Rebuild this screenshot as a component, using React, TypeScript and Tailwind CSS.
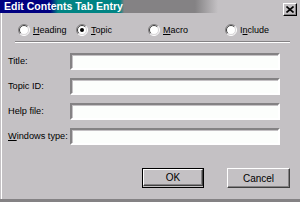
import React from "react";

const font = { fontFamily: '"Liberation Sans", Arial, sans-serif' };

function Radio({ checked }: { checked?: boolean }) {
  return (
    <svg width="12" height="12" viewBox="0 0 12 12" className="shrink-0">
      <circle cx="6" cy="6" r="5" fill="#fff" />
      <path d="M2.1 9.9 A5.5 5.5 0 0 1 9.9 2.1" stroke="#848284" fill="none" />
      <path d="M9.9 2.1 A5.5 5.5 0 0 1 2.1 9.9" stroke="#fff" fill="none" />
      <path d="M2.8 9.2 A4.5 4.5 0 0 1 9.2 2.8" stroke="#404040" fill="none" />
      <path d="M9.2 2.8 A4.5 4.5 0 0 1 2.8 9.2" stroke="#d8d6d8" fill="none" />
      {checked && <circle cx="6" cy="6" r="2" fill="#000" />}
    </svg>
  );
}

function Field({ label, u }: { label: string; u?: boolean }) {
  return (
    <div className="flex h-[17px] items-center">
      <div className="w-[68px] pl-[6px] text-[9.2px] leading-none text-black">
        {u ? (
          <>
            <span className="underline">{label[0]}</span>
            {label.slice(1)}
          </>
        ) : (
          label
        )}
      </div>
      <div className="h-[17px] w-[210px] border-2 border-t-[#848284] border-l-[#848284] border-b-white border-r-white bg-[#fcfefc] shadow-[inset_1px_1px_0_#c4c1c4]" />
    </div>
  );
}

export default function App() {
  const radios = [
    { label: "Heading", key: 0, w: "w-[58px]" },
    { label: "Topic", key: 0, w: "w-[72px]", checked: true },
    { label: "Macro", key: 0, w: "w-[77px]" },
    { label: "Include", key: 1, w: "w-[70px]" },
  ];

  return (
    <div
      className="relative h-[202px] w-[300px] overflow-hidden bg-[#c4c1c4] border-b-[3px] border-[#848284] flex flex-col"
      style={font}
    >
      <div className="h-[13px] shrink-0 bg-[linear-gradient(to_right,#000080_0px,#000080_50px,#008484_58px,#008484_120px,#848284_124px,#848284_195px,#c4c1c4_218px)] pl-[4px] text-[10.5px] font-bold leading-[13px] text-white">
        Edit Contents Tab Entry
      </div>
      <div className="absolute left-[283px] top-[3px] flex h-[13px] w-[14px] items-center justify-center border border-t-white border-l-white border-r-black border-b-black bg-[#c4c1c4] shadow-[inset_-1px_-1px_0_#848284]">
        <svg width="8" height="7" viewBox="0 0 8 7">
          <path d="M0.5 0.5 L7.5 6.5 M7.5 0.5 L0.5 6.5" stroke="#000" strokeWidth="1.6" />
        </svg>
      </div>

      <div className="ml-[1px] flex flex-1 flex-col border-l border-white">
        <div className="mt-[11px] flex h-[12px] items-center pl-[16px]">
          {radios.map((r) => (
            <div key={r.label} className={`flex items-center gap-[3px] ${r.w}`}>
              <Radio checked={r.checked} />
              <span className="text-[9px] leading-none text-black">
                {r.label.slice(0, r.key)}
                <span className="underline">{r.label[r.key]}</span>
                {r.label.slice(r.key + 1)}
              </span>
            </div>
          ))}
        </div>

        <div className="ml-[13px] mt-[5px] w-[275px] border-t border-b border-t-[#848284] border-b-white" />

        <div className="mt-[10px] flex flex-col gap-[8px]">
          <Field label="Title:" />
          <Field label="Topic ID:" />
          <Field label="Help file:" />
          <Field label="Windows type:" u />
        </div>

        <div className="mt-[23px] flex justify-end gap-[23px] pr-[10px]">
          <div className="border border-black">
            <div className="flex h-[17px] w-[60px] items-center justify-center border border-t-white border-l-white border-r-[#404040] border-b-[#404040] shadow-[inset_-1px_-1px_0_#848284] text-[10px] text-black">
              OK
            </div>
          </div>
          <div className="flex h-[20px] w-[63px] items-center justify-center border border-t-white border-l-white border-r-[#404040] border-b-[#404040] shadow-[inset_-1px_-1px_0_#848284] text-[10px] text-black">
            Cancel
          </div>
        </div>
      </div>
    </div>
  );
}
